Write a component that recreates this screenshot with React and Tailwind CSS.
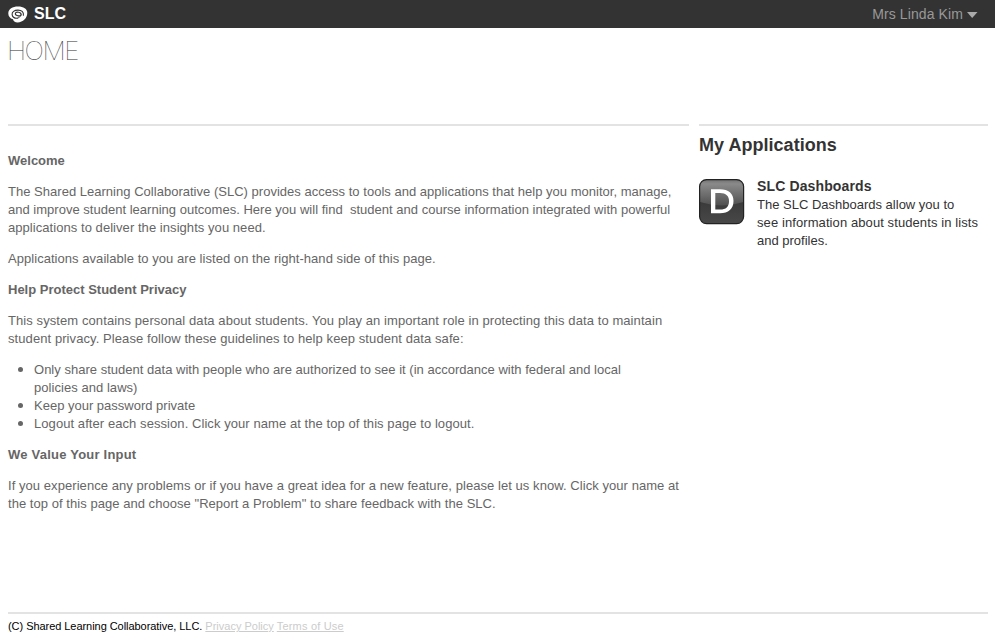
const Line = ({ className = '', children }) => <span className={`block whitespace-pre ${className}`}>{children}</span>;

const Item = ({ className = '', children }) => (
  <li className={`flex ${className}`}>
    <span className="ml-2.5 mr-[11px] mt-1.5 size-[5px] shrink-0 rounded-full bg-[#666]" />
    <div>{children}</div>
  </li>
);

function Logo() {
  return (
    <svg width="20" height="17" viewBox="0 0 20 17" fill="none" strokeLinecap="round">
      <path d="M10 0.600C15.500 0.600 19.300 3 19.300 6.800C19.300 12.200 15 16.400 9.600 16.400C7 16.400 5.200 15 5 13.200C2 12.500 0.300 10 0.300 7.400C0.300 3.300 4.500 0.600 10 0.600Z" fill="#fff" />
      <path d="M15.400 9.300C15.900 6 13.500 4.100 10 4.100C6.200 4.100 3.900 6 4.100 8.400C4.300 10.800 6.500 12.500 9.800 12.300" stroke="#333" strokeWidth="1.1" />
      <ellipse cx="10.200" cy="8" rx="2.900" ry="1.800" stroke="#333" strokeWidth="1.1" transform="rotate(12 10.200 8)" />
      <path d="M13.300 8.800C13 10.400 11.800 11.400 10 11.500" stroke="#333" strokeWidth="0.8" />
    </svg>
  );
}

function DashboardIcon() {
  return (
    <svg className="mt-0.5 block shrink-0" width="46" height="46" viewBox="0 0 46 46">
      <defs>
        <linearGradient id="base" x1="0" y1="0" x2="0" y2="1">
          <stop offset="0" stopColor="#555" />
          <stop offset="0.5" stopColor="#3a3a3a" />
          <stop offset="1" stopColor="#484848" />
        </linearGradient>
        <linearGradient id="gloss" x1="0" y1="0" x2="0" y2="1">
          <stop offset="0" stopColor="#747474" />
          <stop offset="0.15" stopColor="#8a8a8a" />
          <stop offset="1" stopColor="#505050" />
        </linearGradient>
      </defs>
      <rect x="0.6" y="0.6" width="44" height="44" rx="7" fill="url(#base)" />
      <path d="M1 23V8Q1 1 8 1H37Q44.500 1 44.500 8V23Q23 30 1 23Z" fill="url(#gloss)" />
      <rect x="0.6" y="0.6" width="44" height="44" rx="7" fill="none" stroke="#222" strokeWidth="1.2" />
      <path fillRule="evenodd" d="M12 10.300H21C29.500 10.300 34.500 14.500 34.500 22C34.500 29.800 29.500 34.300 21 34.300H12ZM16.300 14V30.600H21C27 30.600 30 27.500 30 22.200C30 17 27 14 21 14Z" fill="#fff" />
    </svg>
  );
}

export default function App() {
  return (
    <div className="flex h-[638px] w-[995px] flex-col overflow-hidden bg-white font-['Liberation_Sans',Arial,sans-serif] text-[13px] leading-[18px] text-[#666]">
      <header className="flex h-7 shrink-0 items-center bg-[#333] pl-2 pr-[17px]">
        <Logo />
        <span className="ml-1.5 text-base font-bold leading-7 text-white">SLC</span>
        <span className="ml-auto text-sm leading-7 tracking-[0.1px] text-[#999]">Mrs Linda Kim</span>
        <svg className="ml-1 mt-px" width="11" height="6" viewBox="0 0 11 6"><path d="M0 0H10.500L5.200 6Z" fill="#aaa" /></svg>
      </header>
      <h1 className="h-24 shrink-0 pl-[7px] pt-1.5 font-['Inter',sans-serif] text-[26px] font-thin leading-[34px] tracking-[-1.5px] text-[#333]">HOME</h1>
      <div className="flex h-[488px] shrink-0 gap-2.5 pl-2 pr-[7px]">
        <main className="w-[681px] border-t-2 border-[#e3e3e3] pt-[26px]">
          <div className="flex flex-col gap-[13px]">
            <h2 className="font-bold">Welcome</h2>
            <p>
              <Line className="tracking-[0.02px]">The Shared Learning Collaborative (SLC) provides access to tools and applications that help you monitor, manage,</Line>
              <Line className="tracking-[0.015px]">and improve student learning outcomes. Here you will find  student and course information integrated with powerful</Line>
              <Line className="tracking-[0.055px]">applications to deliver the insights you need.</Line>
            </p>
            <p className="tracking-[0.045px]">Applications available to you are listed on the right-hand side of this page.</p>
            <h2 className="font-bold">Help Protect Student Privacy</h2>
            <p>
              <Line className="tracking-[0.085px]">This system contains personal data about students. You play an important role in protecting this data to maintain</Line>
              <Line className="tracking-[0.08px]">student privacy. Please follow these guidelines to help keep student data safe:</Line>
            </p>
            <ul>
              <Item>
                <Line className="tracking-[0.015px]">Only share student data with people who are authorized to see it (in accordance with federal and local</Line>
                <Line className="tracking-[0.05px]">policies and laws)</Line>
              </Item>
              <Item>Keep your password private</Item>
              <Item className="tracking-[0.07px]">Logout after each session. Click your name at the top of this page to logout.</Item>
            </ul>
            <h2 className="font-bold tracking-[0.22px]">We Value Your Input</h2>
            <p>
              <Line className="tracking-[0.06px]">If you experience any problems or if you have a great idea for a new feature, please let us know. Click your name at</Line>
              <Line className="tracking-[0.045px]">the top of this page and choose "Report a Problem" to share feedback with the SLC.</Line>
            </p>
          </div>
        </main>
        <aside className="w-[289px] border-t-2 border-[#e3e3e3] text-[#333]">
          <h2 className="pt-2 text-lg font-bold leading-[22px] tracking-[0.03px]">My Applications</h2>
          <div className="mt-[21px] flex gap-3">
            <DashboardIcon />
            <div>
              <h3 className="mb-px text-sm font-bold leading-[18px] tracking-[0.13px]">SLC Dashboards</h3>
              <Line>The SLC Dashboards allow you to</Line>
              <Line className="tracking-[0.09px]">see information about students in lists</Line>
              <Line>and profiles.</Line>
            </div>
          </div>
        </aside>
      </div>
      <footer className="ml-2 mr-[7px] flex gap-[3px] border-t-2 border-[#e3e3e3] pt-[5px] text-[11px] leading-[14px] text-black">
        <span className="tracking-[-0.05px]">(C) Shared Learning Collaborative, LLC.</span>
        <a className="text-[#ccc] underline">Privacy Policy</a>
        <a className="tracking-[0.18px] text-[#ccc] underline">Terms of Use</a>
      </footer>
    </div>
  );
}
